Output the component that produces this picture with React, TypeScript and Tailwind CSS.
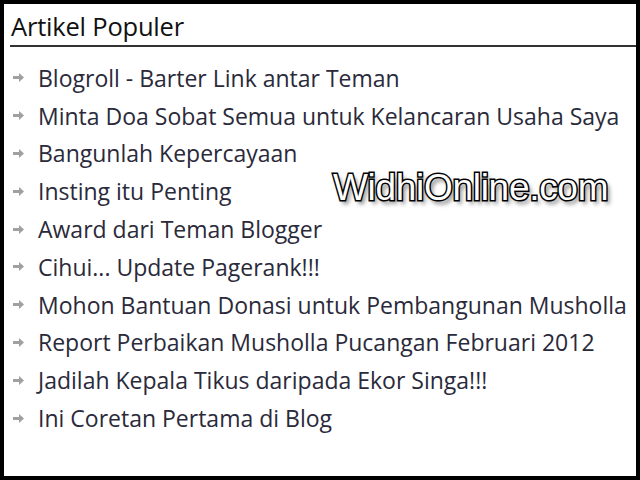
import React from "react";

const items = [
  "Blogroll - Barter Link antar Teman",
  "Minta Doa Sobat Semua untuk Kelancaran Usaha Saya",
  "Bangunlah Kepercayaan",
  "Insting itu Penting",
  "Award dari Teman Blogger",
  "Cihui... Update Pagerank!!!",
  "Mohon Bantuan Donasi untuk Pembangunan Musholla",
  "Report Perbaikan Musholla Pucangan Februari 2012",
  "Jadilah Kepala Tikus daripada Ekor Singa!!!",
  "Ini Coretan Pertama di Blog",
];

function Arrow() {
  return (
    <svg width="11" height="9" viewBox="0 0 11 9" className="shrink-0">
      <path d="M0 3 H6 V0 L11 4.5 L6 9 V6 H0 Z" fill="#a0a0a0" />
    </svg>
  );
}

export default function App() {
  return (
    <div className="w-[640px] h-[480px] bg-black p-[4px] overflow-hidden">
      <div className="relative w-full h-full bg-white pl-[6px] pt-[6px] font-['Open_Sans',sans-serif]">
        <div className="text-[25.5px] leading-[32px] text-[#111] pl-[1px] tracking-[-0.2px]">Artikel Populer</div>
        <div className="h-[2px] bg-[#333] mt-[3px]" />
        <ul className="pt-[12px]">
          {items.map((t) => (
            <li key={t} className="flex items-center h-[37.8px] pl-[3px] gap-[14px]">
              <Arrow />
              <span className="text-[23px] leading-[30px] text-[#2a2a3a] whitespace-nowrap">{t}</span>
            </li>
          ))}
        </ul>
        <div className="absolute left-[329px] top-[162px] text-[37px] leading-[44px] font-['Liberation_Sans',sans-serif] text-white [-webkit-text-stroke:3px_#000] [paint-order:stroke_fill] [text-shadow:3px_4px_4px_rgba(0,0,0,0.5)] tracking-[-0.3px]">
          WidhiOnline.com
        </div>
      </div>
    </div>
  );
}
